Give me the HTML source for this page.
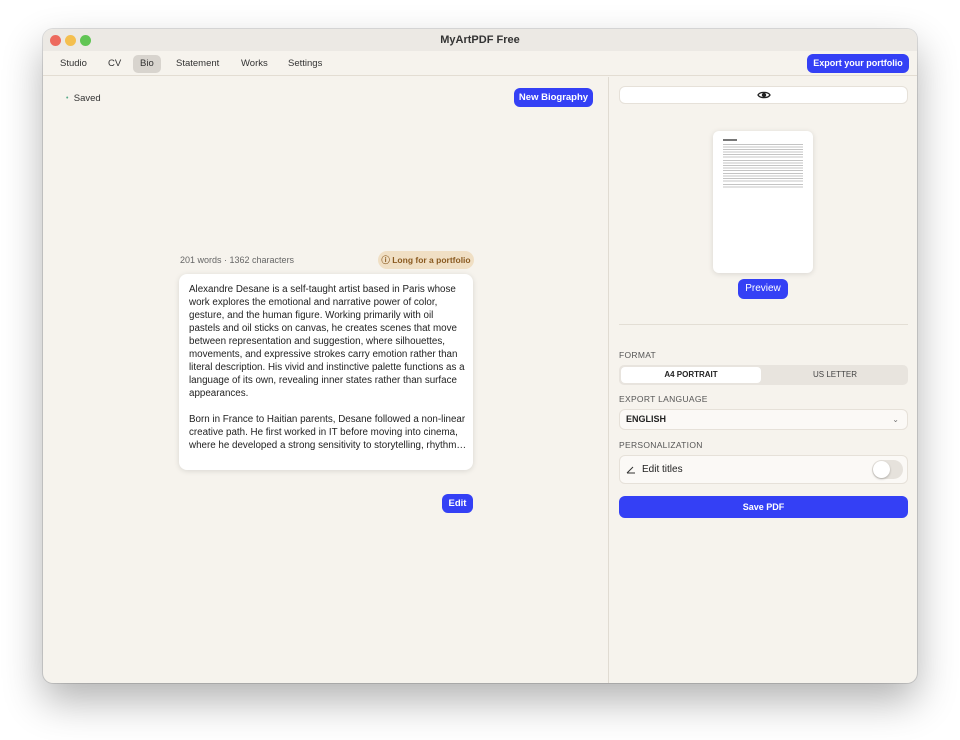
<!DOCTYPE html>
<html><head><style>
*{box-sizing:border-box;margin:0;padding:0}
body{width:960px;height:740px;background:#fff;font-family:"Liberation Sans",sans-serif;position:relative;overflow:hidden;color:#222}
.win{position:absolute;left:43px;top:29px;width:874px;height:654px;background:#f6f3ed;border-radius:10px;box-shadow:0 0 0 1px rgba(0,0,0,.12),0 18px 40px rgba(0,0,0,.3);overflow:hidden}
.title{height:22px;background:#ece9e4;text-align:center;font-size:11px;font-weight:bold;line-height:23px;color:#333;position:relative}
.dot{position:absolute;top:6px;width:11px;height:11px;border-radius:50%}
.tabs{height:25px;border-bottom:1px solid #e3ddd3;position:relative;font-size:9.5px;color:#333}
.tabs span{position:absolute;top:4px;height:18px;line-height:18px;padding:0 7px;border-radius:5px}
.btn{position:absolute;background:#3440f5;color:#fff;font-size:9.5px;font-weight:bold;text-align:center;border-radius:6px}
.abs{position:absolute}
.lbl{position:absolute;left:576px;font-size:8.5px;color:#555;letter-spacing:.3px}
.box{position:absolute;left:576px;width:289px;background:#fbf9f6;border:1px solid #e6e1d9;border-radius:6px}
</style></head><body>
<div class="win">
<div class="title">MyArtPDF Free
<div class="dot" style="left:7px;background:#ed6a5e"></div>
<div class="dot" style="left:22px;background:#f4bf4f"></div>
<div class="dot" style="left:37px;background:#61c554"></div>
</div>
<div class="tabs">
<span style="left:10px">Studio</span>
<span style="left:58px">CV</span>
<span style="left:90px;background:#d8d4ce">Bio</span>
<span style="left:126px">Statement</span>
<span style="left:191px">Works</span>
<span style="left:238px">Settings</span>
<div class="btn" style="left:764px;top:3px;width:102px;height:19px;line-height:19px;font-size:9px">Export your portfolio</div>
</div>
<div class="abs" style="left:565px;top:48px;width:1px;height:606px;background:#e0dbd2"></div>
<div class="abs" style="left:23px;top:64px;font-size:9.5px;color:#333"><span style="color:#5a8;font-size:7px;vertical-align:1px">•</span>&nbsp; Saved</div>
<div class="btn" style="left:471px;top:59px;width:79px;height:19px;line-height:19px">New Biography</div>
<div class="abs" style="left:137px;top:226px;font-size:9px;color:#666">201 words · 1362 characters</div>
<div class="abs" style="left:335px;top:222px;width:96px;height:18px;line-height:18px;border-radius:9px;background:#f0dfc4;color:#8a5a20;font-size:8.5px;font-weight:bold;text-align:center">ⓘ Long for a portfolio</div>
<div class="abs" style="left:136px;top:245px;width:294px;height:196px;background:#fff;border-radius:8px;box-shadow:0 1px 6px rgba(0,0,0,.12);padding:9px 10px;font-size:9.8px;line-height:13px;color:#222;white-space:nowrap;overflow:hidden">Alexandre Desane is a self-taught artist based in Paris whose<br>work explores the emotional and narrative power of color,<br>gesture, and the human figure. Working primarily with oil<br>pastels and oil sticks on canvas, he creates scenes that move<br>between representation and suggestion, where silhouettes,<br>movements, and expressive strokes carry emotion rather than<br>literal description. His vivid and instinctive palette functions as a<br>language of its own, revealing inner states rather than surface<br>appearances.<br><br>Born in France to Haitian parents, Desane followed a non-linear<br>creative path. He first worked in IT before moving into cinema,<br>where he developed a strong sensitivity to storytelling, rhythm…</div>
<div class="btn" style="left:399px;top:465px;width:31px;height:19px;line-height:19px">Edit</div>
<div class="box" style="top:57px;height:18px;background:#fff"><svg class="abs" style="left:137px;top:3px" width="14" height="10" viewBox="0 0 14 10"><path d="M1 5C3 1.5 11 1.5 13 5C11 8.5 3 8.5 1 5Z" fill="none" stroke="#222" stroke-width="1.3"/><circle cx="7" cy="5" r="2.2" fill="#222"/></svg></div>
<div class="abs" style="left:670px;top:102px;width:100px;height:142px;background:#fff;border-radius:6px;box-shadow:0 1px 6px rgba(0,0,0,.12);padding:8px 10px">
<div style="height:2px;width:14px;background:#777;margin-bottom:3px"></div>
<div style="height:14px;background:repeating-linear-gradient(#c4c4c4 0 1px,transparent 1px 2.5px);margin-bottom:2px"></div>
<div style="height:11px;background:repeating-linear-gradient(#c4c4c4 0 1px,transparent 1px 2.5px);margin-bottom:2px"></div>
<div style="height:9px;background:repeating-linear-gradient(#c4c4c4 0 1px,transparent 1px 2.5px);margin-bottom:2px"></div>
<div style="height:5px;background:repeating-linear-gradient(#c4c4c4 0 1px,transparent 1px 2.5px)"></div>
</div>
<div class="btn" style="left:695px;top:250px;width:50px;height:20px;line-height:20px;font-size:10px;font-weight:normal">Preview</div>
<div class="abs" style="left:576px;top:295px;width:289px;height:1px;background:#e3ded5"></div>
<div class="lbl" style="top:321px">FORMAT</div>
<div class="abs" style="left:576px;top:336px;width:289px;height:20px;background:#e8e4de;border-radius:5px">
<div class="abs" style="left:2px;top:2px;width:140px;height:16px;background:#fff;border-radius:4px;font-size:8px;font-weight:bold;text-align:center;line-height:16px">A4 PORTRAIT</div>
<div class="abs" style="left:145px;top:2px;width:142px;height:16px;font-size:8px;text-align:center;line-height:16px;color:#444">US LETTER</div>
</div>
<div class="lbl" style="top:365px">EXPORT LANGUAGE</div>
<div class="box" style="top:380px;height:21px;font-size:9px;font-weight:bold;line-height:19px;padding-left:6px">ENGLISH<span style="position:absolute;right:8px;font-weight:normal;color:#777;font-size:8px">⌄</span></div>
<div class="lbl" style="top:411px">PERSONALIZATION</div>
<div class="box" style="top:426px;height:29px;font-size:10px;line-height:27px;padding-left:22px">Edit titles
<svg class="abs" style="left:6px;top:9px" width="10" height="9" viewBox="0 0 10 9"><path d="M1 8H9M1 8L7 2" stroke="#333" stroke-width="1" fill="none"/></svg>
<div class="abs" style="right:4px;top:4px;width:31px;height:19px;border-radius:10px;background:#e6e2dc"><div class="abs" style="left:1px;top:1px;width:17px;height:17px;border-radius:50%;background:#fff;box-shadow:0 1px 2px rgba(0,0,0,.25)"></div></div>
</div>
<div class="btn" style="left:576px;top:467px;width:289px;height:22px;line-height:22px;font-size:9px">Save PDF</div>
</div>
</body></html>
